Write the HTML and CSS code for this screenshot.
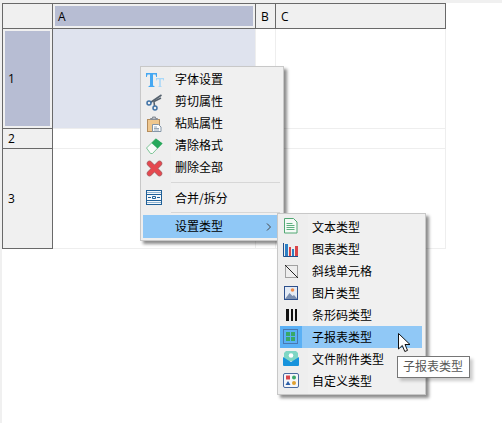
FILE: index.html
```html
<!DOCTYPE html>
<html lang="en">
<head>
    <meta charset="UTF-8">
    <title>设置类型</title>
    <link rel="stylesheet" href="styles.css">
</head>
<body>
    <div class="sheet">
        <div class="head corner"></div>
        <div class="head selected"><span>A</span></div>
        <div class="head">B</div>
        <div class="head">C</div>

        <div class="head side selected"><span>1</span></div>
        <div class="cell picked"></div>
        <div class="cell"></div>
        <div class="cell"></div>

        <div class="head side">2</div>
        <div class="cell"></div>
        <div class="cell"></div>
        <div class="cell"></div>

        <div class="head side">3</div>
        <div class="cell"></div>
        <div class="cell"></div>
        <div class="cell"></div>
    </div>

    <div class="menu main-menu">
        <div class="item">
            <span class="icon">
                <svg width="22" height="22" viewBox="0 0 22 22">
                    <path d="M3 5h11v4h-.8l-.7-2.500H10V17.500l1.500.7v.8H5.500v-.8l1.500-.7V6.500H4.500L3.800 9H3z" fill="#45a8f2"/>
                    <path d="M13 10h8v2.500h-.7l-.5-1.300h-2V18l.9.400v.6h-3.400v-.6l.9-.4v-6.800h-2l-.5 1.300H13z" fill="#a9d8f8"/>
                </svg>
            </span>
            <span class="label">字体设置</span>
        </div>
        <div class="item">
            <span class="icon">
                <svg width="22" height="22" viewBox="0 0 22 22" fill="none">
                    <path d="M18.500 5L7.500 12.500" stroke="#56626e" stroke-width="1.600"/>
                    <path d="M18 8L11 11.500l.5 4.500" stroke="#56626e" stroke-width="1.600"/>
                    <circle cx="6" cy="13" r="2" stroke="#3f72a6" stroke-width="1.500"/>
                    <circle cx="12" cy="18" r="2" stroke="#3f72a6" stroke-width="1.500"/>
                </svg>
            </span>
            <span class="label">剪切属性</span>
        </div>
        <div class="item">
            <span class="icon">
                <svg width="22" height="22" viewBox="0 0 22 22">
                    <rect x="4.500" y="7.500" width="12" height="12" fill="#efc78e" stroke="#b48c5c"/>
                    <path d="M7.500 7.500V6.500h2V5h3v1.500h2v1z" fill="#b9bdc3" stroke="#868c94"/>
                    <path d="M9.500 12.500h6l2.500 2.500v4.500H9.500z" fill="#fdfdfd" stroke="#8496a8"/>
                    <path d="M11 15h3M11 16.500h5M11 18h5" stroke="#98a8b8"/>
                </svg>
            </span>
            <span class="label">粘贴属性</span>
        </div>
        <div class="item">
            <span class="icon">
                <svg width="22" height="22" viewBox="0 0 22 22">
                    <path d="M3.500 14l9-9 6.500 4.500-9.500 10H7.500z" fill="#fafafa" stroke="#7cc596"/>
                    <path d="M8.500 9l4.500-4.500L19.500 9.500l-5 5z" fill="#28a85c"/>
                </svg>
            </span>
            <span class="label">清除格式</span>
        </div>
        <div class="item">
            <span class="icon">
                <svg width="22" height="22" viewBox="0 0 22 22">
                    <path d="M6.500 7.500l10 10M16.500 7.500l-10 10" stroke="#a8686c" stroke-width="5.500" stroke-linecap="round"/>
                    <path d="M6.500 7.500l10 10M16.500 7.500l-10 10" stroke="#e5484f" stroke-width="4.200" stroke-linecap="round"/>
                </svg>
            </span>
            <span class="label">删除全部</span>
        </div>
        <div class="sep"></div>
        <div class="item">
            <span class="icon">
                <svg width="22" height="22" viewBox="0 0 22 22" fill="none">
                    <rect x="3.500" y="3.500" width="15" height="14" fill="#f6f8fa" stroke="#1f6098"/>
                    <path d="M3 7.500h16M3 13.500h16" stroke="#1f6098"/>
                    <path d="M4 5.500h14M4 15.500h14" stroke="#8fb4d2"/>
                    <path d="M5 10.500h3M14 10.500h3M9.500 9.500h3v2h-3z" stroke="#1f6098"/>
                </svg>
            </span>
            <span class="label">合并/拆分</span>
        </div>
        <div class="sep sep-low"></div>
        <div class="item active">
            <span class="icon"></span>
            <span class="label">设置类型</span>
            <svg class="arrow" width="6" height="8" viewBox="0 0 6 8" fill="none">
                <path d="M1 0.500L4.500 4L1 7.500" stroke="#444"/>
            </svg>
        </div>
    </div>

    <div class="menu sub-menu">
        <div class="item">
            <span class="icon">
                <svg width="22" height="22" viewBox="0 0 22 22">
                    <path d="M4.500 2.500h9l3.500 3.500v11H4.500z" fill="#f4faf6" stroke="#52a874"/>
                    <path d="M6.500 7.500h6M6.500 9.500h8M6.500 11.500h8M6.500 13.500h8" stroke="#5cb07e"/>
                </svg>
            </span>
            <span class="label">文本类型</span>
        </div>
        <div class="item">
            <span class="icon">
                <svg width="22" height="22" viewBox="0 0 22 22">
                    <path d="M3.500 5v13.500H18" fill="none" stroke="#1f4e8c"/>
                    <rect x="5" y="6" width="3" height="12" fill="#2c7fc4"/>
                    <rect x="9" y="9" width="2" height="9" fill="#d9454a"/>
                    <rect x="12" y="11" width="2" height="7" fill="#2c7fc4"/>
                    <rect x="15" y="8" width="3" height="10" fill="#d9454a"/>
                </svg>
            </span>
            <span class="label">图表类型</span>
        </div>
        <div class="item">
            <span class="icon">
                <svg width="22" height="22" viewBox="0 0 22 22" fill="none">
                    <rect x="5.500" y="5.500" width="12" height="12" stroke="#555" stroke-dasharray="1 1"/>
                    <path d="M5 5l13 13" stroke="#222"/>
                </svg>
            </span>
            <span class="label">斜线单元格</span>
        </div>
        <div class="item">
            <span class="icon">
                <svg width="22" height="22" viewBox="0 0 22 22">
                    <rect x="4.500" y="4.500" width="13" height="13" fill="#e4ebf5" stroke="#2c4f8c"/>
                    <circle cx="12.500" cy="8" r="1.800" fill="#ef8b4a"/>
                    <path d="M5 17l4.500-6 3 3 1.500-1 3.500 4z" fill="#7a8fb0"/>
                </svg>
            </span>
            <span class="label">图片类型</span>
        </div>
        <div class="item">
            <span class="icon">
                <svg width="22" height="22" viewBox="0 0 22 22">
                    <path d="M6 5h3v12H6zM11 5h2v12h-2zM15 5h2v12h-2z" fill="#111"/>
                </svg>
            </span>
            <span class="label">条形码类型</span>
        </div>
        <div class="item active">
            <span class="icon boxed">
                <svg width="22" height="22" viewBox="0 0 22 22" fill="none">
                    <rect x="3.500" y="3.500" width="14" height="14" stroke="#4a78b0"/>
                    <path d="M6 6h4v4H6zM11 6h4v4h-4zM6 11h4v4H6zM11 11h4v4h-4z" fill="#38a868"/>
                </svg>
            </span>
            <span class="label">子报表类型</span>
        </div>
        <div class="item">
            <span class="icon">
                <svg width="22" height="22" viewBox="0 0 22 22">
                    <path d="M6 3h10l2 2v8H4V5z" fill="#7fd6c4"/>
                    <circle cx="11" cy="7.500" r="2.300" fill="#fff"/>
                    <path d="M3 9l8 5 8-5v8a1 1 0 0 1-1 1H4a1 1 0 0 1-1-1z" fill="#1793dc"/>
                </svg>
            </span>
            <span class="label">文件附件类型</span>
        </div>
        <div class="item">
            <span class="icon">
                <svg width="22" height="22" viewBox="0 0 22 22">
                    <rect x="3.500" y="3.500" width="15" height="14" rx="1.500" fill="#f4f6fa" stroke="#4a6aa0"/>
                    <rect x="6" y="5.500" width="4" height="4" fill="#d9454a"/>
                    <circle cx="14" cy="7.500" r="2" fill="#3aa86a"/>
                    <path d="M8 11l2.500 4h-5z" fill="#2c5fa8"/>
                    <circle cx="14" cy="13" r="2" fill="#e0a030"/>
                </svg>
            </span>
            <span class="label">自定义类型</span>
        </div>
    </div>

    <svg class="cursor" width="16" height="22" viewBox="0 0 16 22">
        <path d="M1.500 1.500v15.500l3.800-3.500 2.500 6 2.700-1.100-2.500-5.900h5z" fill="#fff" stroke="#111"/>
    </svg>

    <div class="tooltip">子报表类型</div>
</body>
</html>
```

FILE: styles.css
```css
html, body {
    height: 100%;
}

body {
    margin: 0;
    box-sizing: border-box;
    background: #fff;
    border-top: 3px solid #f0f0f0;
    border-left: 2px solid #f0f0f0;
    font-family: "Noto Sans CJK SC", "Liberation Sans", sans-serif;
    font-size: 12px;
    color: #000;
    overflow: hidden;
}

.sheet {
    display: grid;
    grid-template-columns: 51px 203px 20px 170px;
    grid-template-rows: 26px 100px 20px 100px;
    width: 444px;
    font-family: "Open Sans", "Noto Sans CJK SC", sans-serif;
}

.head {
    display: flex;
    align-items: center;
    padding-left: 5px;
    background: #f0f0f0;
    border: solid #696969;
    border-width: 1px 1px 1px 0;
}

.corner {
    border-left-width: 1px;
}

.head.selected {
    padding: 2px;
}

.head.selected span {
    display: flex;
    align-items: center;
    flex: 1;
    height: 100%;
    padding-left: 3px;
    background: #b7bdd3;
}

.side {
    border-top: 0;
    border-left-width: 1px;
}

.cell {
    background: #fff;
    border-right: 1px solid #eee;
    border-bottom: 1px solid #eee;
}

.cell.picked {
    background: #dfe3ee;
}

.menu {
    position: absolute;
    display: flex;
    flex-direction: column;
    box-sizing: border-box;
    padding: 2px;
    background: linear-gradient(90deg, #eee 30px, #f0f0f0 30px);
    border: 1px solid #c8c8c8;
    box-shadow: 3px 3px 3px rgba(0, 0, 0, 0.45);
}

.main-menu {
    left: 140px;
    top: 66px;
    width: 144px;
    height: 175px;
    padding-top: 1px;
}

.sub-menu {
    left: 277px;
    top: 213px;
    width: 149px;
    height: 182px;
    padding-right: 3px;
}

.item {
    display: flex;
    align-items: center;
    height: 22px;
    flex: none;
    position: relative;
}

.icon {
    display: flex;
    width: 22px;
    height: 22px;
    flex: none;
}

.label {
    margin-left: 10px;
    padding-bottom: 2px;
}

.item.active {
    background: #90c8f6;
}

.main-menu .item.active {
    height: 23px;
}

.arrow {
    position: absolute;
    right: 9px;
    top: 8px;
}

.boxed {
    background: #5ab0f5;
}

.sep {
    height: 1px;
    margin: 4px 1px 4px 28px;
    background: #d7d7d7;
    flex: none;
}

.sep-low {
    margin-top: 3px;
    margin-bottom: 2px;
}

.cursor {
    position: absolute;
    left: 397px;
    top: 332px;
}

.tooltip {
    position: absolute;
    left: 397px;
    top: 356px;
    width: 73px;
    height: 22px;
    box-sizing: border-box;
    padding-left: 5px;
    line-height: 18px;
    background: #fff;
    border: 1px solid #767676;
    color: #575757;
    box-shadow: 3px 3px 3px rgba(0, 0, 0, 0.2);
}
```
